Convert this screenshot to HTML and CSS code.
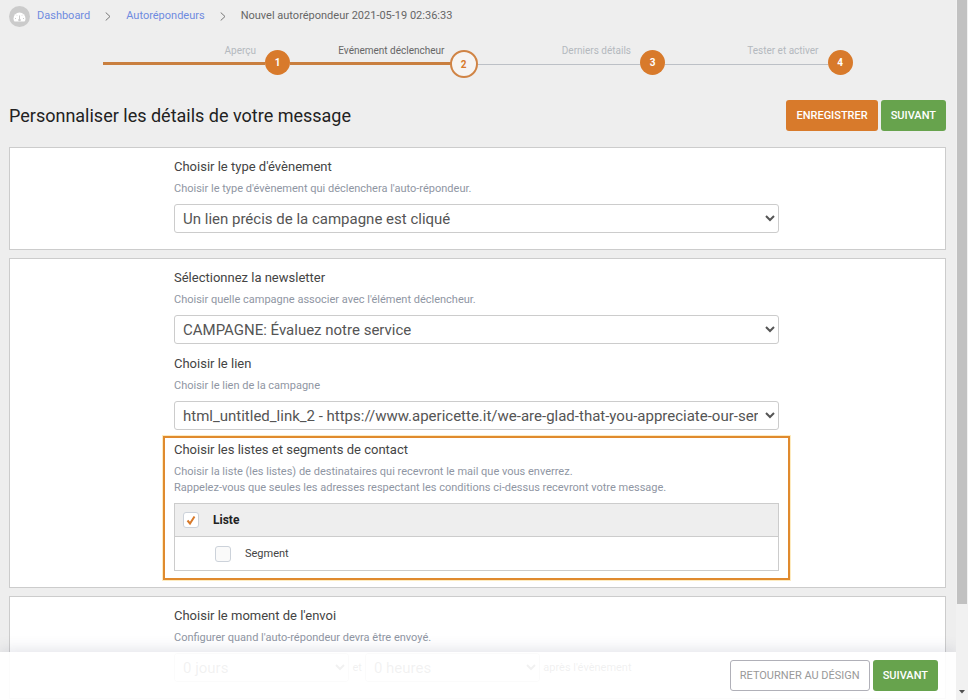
FILE: index.html
```html
<!doctype html>
<html lang="fr">
<head>
<meta charset="utf-8">
<title>Nouvel autorépondeur</title>
<link rel="stylesheet" href="styles.css">
</head>

<body>
<div class="main">
	<nav class="breadcrumb">
		<svg class="home" width="21" height="21" viewBox="0 0 21 21">
			<circle cx="10.5" cy="10.5" r="10.5" fill="#cbcbcb"/>
			<path d="M4.500 12.500a6 6 0 0 1 12 0q0 1.800-1 3h-10q-1-1.200-1-3z" fill="#fff"/>
			<path d="M10.500 13.500V9.500M7 12.500h-1M15 12.500h-1M8 9.500l-.7-.7M13 9.500l.7-.7" stroke="#cbcbcb"/>
			<circle cx="10.5" cy="14" r="1.3" fill="#cbcbcb"/>
		</svg>
		<a href="#">Dashboard</a>
		<svg class="arrow" width="6" height="9" viewBox="0 0 6 9"><path d="M.7.500l4.300 4-4.300 4"/></svg>
		<a href="#">Autorépondeurs</a>
		<svg class="arrow" width="6" height="9" viewBox="0 0 6 9"><path d="M.7.500l4.300 4-4.300 4"/></svg>
		<span>Nouvel autorépondeur 2021-05-19 02:36:33</span>
	</nav>

	<ol class="steps">
		<li class="done"><span class="name">Aperçu</span><span class="num">1</span></li>
		<li class="done active"><span class="name">Evénement déclencheur</span><span class="num">2</span></li>
		<li><span class="name">Derniers détails</span><span class="num">3</span></li>
		<li><span class="name">Tester et activer</span><span class="num">4</span></li>
	</ol>

	<div class="title">
		<h1>Personnaliser les détails de votre message</h1>
		<button type="button" class="btn orange">ENREGISTRER</button>
		<button type="button" class="btn green">SUIVANT</button>
	</div>

	<div class="box">
		<div class="group">
			<label class="head" for="eventType">Choisir le type d'évènement</label>
			<p class="hint">Choisir le type d'évènement qui déclenchera l'auto-répondeur.</p>
			<select id="eventType"><option>Un lien précis de la campagne est cliqué</option></select>
		</div>
	</div>

	<div class="box">
		<div class="group">
			<label class="head" for="newsletter">Sélectionnez la newsletter</label>
			<p class="hint">Choisir quelle campagne associer avec l'élément déclencheur.</p>
			<select id="newsletter"><option>CAMPAGNE: Évaluez notre service</option></select>
		</div>
		<div class="group">
			<label class="head" for="link">Choisir le lien</label>
			<p class="hint">Choisir le lien de la campagne</p>
			<select id="link"><option>html_untitled_link_2 - https://www.apericette.it/we-are-glad-that-you-appreciate-our-service</option></select>
		</div>
		<div class="group marked">
			<h2 class="head">Choisir les listes et segments de contact</h2>
			<p class="hint">Choisir la liste (les listes) de destinataires qui recevront le mail que vous enverrez.<br>Rappelez-vous que seules les adresses respectant les conditions ci-dessus recevront votre message.</p>
			<div class="lists">
				<label class="list"><input type="checkbox" checked>Liste</label>
				<label class="segment"><input type="checkbox">Segment</label>
			</div>
		</div>
	</div>

	<div class="box">
		<div class="group">
			<h2 class="head">Choisir le moment de l'envoi</h2>
			<p class="hint">Configurer quand l'auto-répondeur devra être envoyé.</p>
			<div class="delay">
				<select aria-label="Jours"><option>0 jours</option></select>
				<span>et</span>
				<select aria-label="Heures"><option>0 heures</option></select>
				<span>après l'évènement</span>
			</div>
		</div>
	</div>

	<div class="footer">
		<button type="button" class="btn white">RETOURNER AU DÉSIGN</button>
		<button type="button" class="btn green">SUIVANT</button>
	</div>
</div>
<div class="scrollbar">
	<div class="thumb"></div>
	<svg width="6" height="4" viewBox="0 0 6 4"><path d="M0 0h6l-3 3.500z" fill="#505050"/></svg>
</div>
</body>
</html>
```
FILE: styles.css
```css
* {
	box-sizing: border-box;
}
body {
	margin: 0;
	height: 100vh;
	display: flex;
	overflow: hidden;
	background: #eee;
	color: #444;
	font: 11px/16px Roboto, "Liberation Sans", sans-serif;
}
h1, h2, p, ol {
	margin: 0;
	padding: 0;
	font-weight: normal;
}
button, select {
	font-family: inherit;
}
.main {
	flex: 1;
	min-width: 0;
	position: relative;
	overflow: hidden;
	padding: 5px 10px 0 9px;
}

/* breadcrumb */
.breadcrumb {
	display: flex;
	align-items: center;
	gap: 15px;
	height: 22px;
	color: #666;
}
.breadcrumb a {
	color: #6f8be0;
	text-decoration: none;
}
.home {
	margin-right: -8px;
}
.arrow path {
	fill: none;
	stroke: #777;
}

/* steps */
.steps {
	display: flex;
	max-width: 750px;
	height: 28px;
	margin: 23px auto 0;
	list-style: none;
	font-size: 10px;
}
.steps li {
	flex: 1;
	display: flex;
	align-items: flex-start;
}
.name {
	flex: 1;
	height: 15px;
	padding-right: 9px;
	border-bottom: 1px solid #bcc0c6;
	color: #b4b9be;
	text-align: right;
	line-height: 2px;
}
.done .name {
	border-bottom: 3px solid #c97f3f;
}
.active .name {
	color: #666;
}
.num {
	width: 25px;
	height: 25px;
	border-radius: 50%;
	background: #d87a2b;
	color: #fff;
	font-weight: bold;
	line-height: 26px;
	text-align: center;
}
.active .num {
	width: 28px;
	height: 28px;
	margin-left: -4px;
	border: 2px solid #d08445;
	background: #f6f4f2;
	color: #d87a2b;
}

/* title and buttons */
.title {
	display: flex;
	align-items: center;
	gap: 3px;
	margin: 22px 0 16px;
}
h1 {
	flex: 1;
	color: #222;
	font-size: 18px;
	line-height: 24px;
}
.btn {
	height: 31px;
	padding: 0 9px;
	border: 1px solid transparent;
	border-radius: 3px;
	color: #fff;
	font-size: 11px;
	font-weight: 500;
}
.orange {
	background: #d87a2b;
}
.green {
	background: #67a34d;
}
.white {
	background: #fff;
	border-color: #b0b0b8;
	color: #999;
	font-weight: 400;
}

/* boxes */
.box {
	margin-bottom: 8px;
	padding: 8px 2px 7px 0;
	border: 1px solid #ccc;
	background: #fff;
}
.group {
	position: relative;
	max-width: 605px;
	margin: 0 auto;
	padding-bottom: 9px;
}
.head {
	display: block;
	margin-bottom: 3px;
	font-size: 13px;
	line-height: 22px;
}
.hint {
	margin-bottom: 7px;
	color: #8f96a3;
}
select {
	display: block;
	width: 100%;
	height: 29px;
	padding: 0 4px;
	border: 1px solid #ccc;
	border-radius: 3px;
	background-color: #fff;
	color: #555;
	font-size: 15px;
}
.marked::after {
	content: "";
	position: absolute;
	top: -3px;
	right: -11px;
	bottom: 0;
	left: -11px;
	border: 2px solid #e08a2e;
	box-shadow: 0 0 0 1px #fdebc0;
	pointer-events: none;
}
.lists {
	border: 1px solid #ccc;
}
.lists label {
	display: flex;
	align-items: center;
	gap: 14px;
	height: 33px;
	padding-left: 8px;
}
.lists .list {
	background: #eee;
	border-bottom: 1px solid #ccc;
	color: #222;
	font-size: 12px;
	font-weight: bold;
}
.lists .segment {
	padding-left: 40px;
}
input[type=checkbox] {
	appearance: none;
	width: 16px;
	height: 16px;
	margin: 0;
	border: 1px solid #ccd2da;
	border-radius: 3px;
	background: #fafafa;
}
input[type=checkbox]:checked {
	background: #fff url("data:image/svg+xml,%3Csvg xmlns='http://www.w3.org/2000/svg' viewBox='0 0 14 14'%3E%3Cpath d='M3.500 7.500l2.500 3 4.500-7' fill='none' stroke='%23d87a2b' stroke-width='2'/%3E%3C/svg%3E") no-repeat;
}
.delay {
	display: flex;
	align-items: center;
	gap: 3px;
}
.delay select {
	flex: 0 0 29%;
}

/* bar fixed over the bottom of the page */
.footer {
	position: absolute;
	right: 0;
	bottom: 0;
	left: 0;
	display: flex;
	justify-content: flex-end;
	gap: 3px;
	height: 48px;
	padding: 8px 18px 0;
	background: rgba(255, 255, 255, .92);
	box-shadow: 0 -2px 14px rgba(60, 70, 110, .15);
}

/* scrollbar */
.scrollbar {
	display: flex;
	flex-direction: column;
	align-items: center;
	justify-content: space-between;
	width: 12px;
	padding-bottom: 6px;
	background: #f1f1f1;
}
.thumb {
	width: 10px;
	height: 87%;
	background: #c1c1c1;
}
```
